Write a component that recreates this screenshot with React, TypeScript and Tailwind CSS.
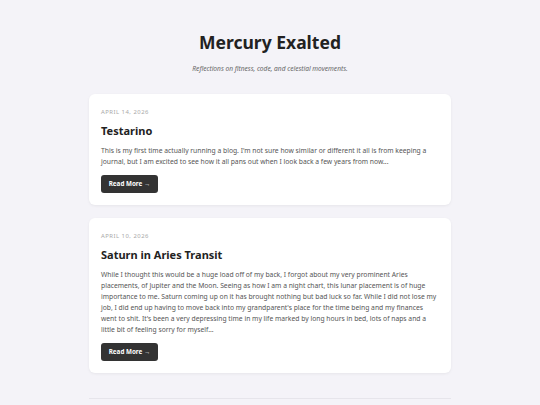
const posts = [
  {
    date: 'April 14, 2026',
    title: 'Testarino',
    excerpt:
      "This is my first time actually running a blog. I'm not sure how similar or different it all is from keeping a journal, but I am excited to see how it all pans out when I look back a few years from now...",
  },
  {
    date: 'April 10, 2026',
    title: 'Saturn in Aries Transit',
    excerpt:
      "While I thought this would be a huge load off of my back, I forgot about my very prominent Aries placements, of Jupiter and the Moon. Seeing as how I am a night chart, this lunar placement is of huge importance to me. Saturn coming up on it has brought nothing but bad luck so far. While I did not lose my job, I did end up having to move back into my grandparent's place for the time being and my finances went to shit. It's been a very depressing time in my life marked by long hours in bed, lots of naps and a little bit of feeling sorry for myself...",
  },
];

export default function App() {
  return (
    <div className="min-h-[405px] bg-[#f4f3f8] font-['Noto_Sans',sans-serif] text-[#222]">
      <div className="w-[362px] mx-auto">
        {/* Header */}
        <header className="pt-[30px] pb-[20px] text-center">
          <h1 className="text-[17.5px] leading-[24px] font-bold text-[#222]">Mercury Exalted</h1>
          <p className="mt-[10px] text-[6.6px] leading-[10px] italic text-[#666]">
            Reflections on fitness, code, and celestial movements.
          </p>
        </header>

        {/* Posts */}
        <div className="flex flex-col gap-[13px]">
          {posts.map((post) => (
            <article
              key={post.title}
              className="bg-white rounded-[6px] shadow-[0_1px_3px_rgba(0,0,0,0.06)] px-[12px] pt-[14px] pb-[12px]"
            >
              <p className="text-[5.9px] leading-[8px] font-normal uppercase tracking-[0.5px] text-[#a8a8a8]">{post.date}</p>
              <h2 className="mt-[7px] text-[11px] leading-[15px] font-bold text-[#222]">{post.title}</h2>
              <p className="mt-[7px] text-[6.75px] leading-[11px] text-[#555]">{post.excerpt}</p>
              <button className="mt-[8px] h-[18px] w-[57px] rounded-[3px] bg-[#333] text-white text-[6.3px] font-bold flex items-center justify-center">
                Read More →
              </button>
            </article>
          ))}
        </div>

        <div className="mt-[25px] border-t border-[#e6e5eb]" />
      </div>
    </div>
  );
}
